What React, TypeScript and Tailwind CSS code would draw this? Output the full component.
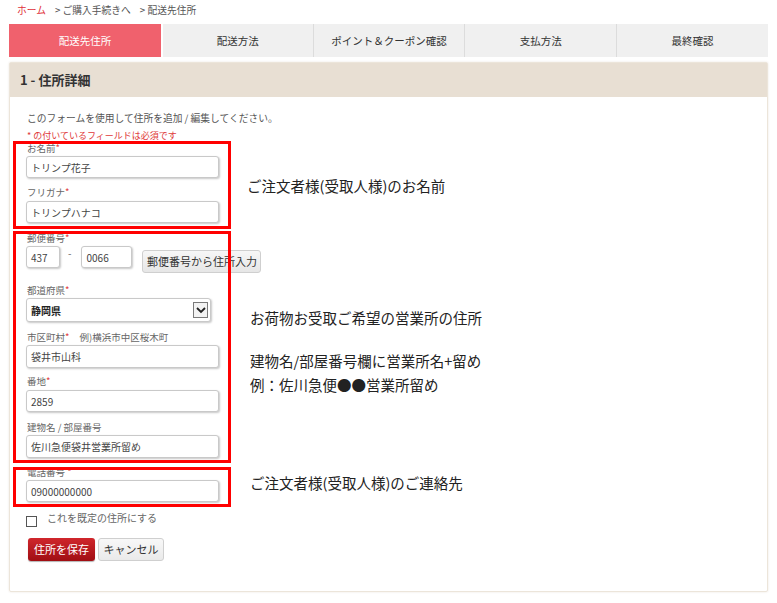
import type { ReactNode } from "react";

const tabs = ["配送先住所", "配送方法", "ポイント＆クーポン確認", "支払方法", "最終確認"];

const field =
  "flex items-center rounded-[3px] border border-[#c9c9c9] bg-white px-[4px] text-[10px] text-[#444] shadow-[1px_1px_2px_rgba(0,0,0,0.22)]";

function Label({ children, req, className = "" }: { children: ReactNode; req?: boolean; className?: string }) {
  return (
    <div className={`h-[12px] pl-[1px] text-[9.5px] leading-[12px] text-[#666] ${className}`}>
      {children}
      {req && <span className="text-[#e03a3a]">*</span>}
    </div>
  );
}

function Field({ value, className = "" }: { value: string; className?: string }) {
  return <div className={`${field} h-[22px] w-[193px] ${className}`}>{value}</div>;
}

export default function App() {
  return (
    <div className="relative h-[603px] w-[777px] overflow-hidden bg-white font-['Noto_Sans_CJK_JP',sans-serif] text-[#333]">
      {/* breadcrumb */}
      <div className="flex h-[24px] items-start gap-[6px] pl-[17px] pt-[3px] text-[9.75px] leading-[14px] text-[#555]">
        <span className="text-[#e0303a]">ホーム</span>
        <span className="ml-[3px]">&gt; ご購入手続きへ</span>
        <span className="ml-[3px]">&gt; 配送先住所</span>
      </div>

      {/* steps */}
      <div className="mx-[9px] grid h-[33px] grid-cols-5 bg-[#f0f0f0] text-[10.5px]">
        {tabs.map((t, i) => (
          <div
            key={t}
            className={
              i === 0
                ? "flex items-center justify-center bg-[#f0616d] text-white"
                : i === 1
                  ? "flex items-center justify-center border-l-2 border-white text-[#333]"
                  : "flex items-center justify-center border-l border-[#dcdcdc] text-[#333]"
            }
          >
            {t}
          </div>
        ))}
      </div>

      {/* panel */}
      <div className="mx-[9px] mt-[5px] h-[530px] rounded-[2px] border border-[#ece5da] shadow-[0_0_2px_rgba(180,160,130,0.3)]">
        <div className="flex h-[34px] items-center bg-[#e8dfd3] pl-[10px] text-[13px] font-bold text-[#333]">
          1 - 住所詳細
        </div>

        <div className="pl-[16px]">
          <div className="mt-[14px] pl-[1px] text-[9.75px] leading-[14px] text-[#555]">
            このフォームを使用して住所を追加 / 編集してください。
          </div>
          <div className="mt-[5px] pl-[1px] text-[9px] leading-[11px] text-[#e03a3a]">
            * の付いているフィールドは必須です
          </div>

          <Label req className="mt-[1px]">
            お名前
          </Label>
          <Field value="トリンプ花子" className="mt-[2px]" />
          <Label req className="mt-[8px]">
            フリガナ
          </Label>
          <Field value="トリンプハナコ" className="mt-[3px]" />

          <Label req className="mt-[9px]">
            郵便番号
          </Label>
          <div className="mt-[2px] flex h-[27px] items-start">
            <div className={`${field} h-[22px] w-[34px]`}>437</div>
            <span className="mx-[8px] mt-[1px] text-[10px] leading-[12px] text-[#666]">-</span>
            <div className={`${field} ml-[2px] h-[22px] w-[51px]`}>0066</div>
            <div className="ml-[10px] mt-[4px] flex h-[23px] w-[119px] items-center justify-center rounded-[3px] border border-[#cfcfcf] bg-gradient-to-b from-[#f7f7f7] to-[#e6e6e6] text-[11px] text-[#333]">
              郵便番号から住所入力
            </div>
          </div>

          <Label req className="mt-[11px]">
            都道府県
          </Label>
          <div className={`${field} mt-[2px] h-[24px] w-[185px] justify-between pr-[2px]`}>
            <span className="font-bold text-[#222]">静岡県</span>
            <span className="flex h-[16px] w-[15px] items-center justify-center border border-[#7a7a7a] bg-[#f3f3f3]">
              <svg width="10" height="7" viewBox="0 0 10 7">
                <polyline points="1,1 5,5 9,1" fill="none" stroke="#222" strokeWidth="1.8" />
              </svg>
            </span>
          </div>

          <Label className="mt-[9px]">
            市区町村<span className="text-[#e03a3a]">*</span>
            <span className="ml-[10px]">例)横浜市中区桜木町</span>
          </Label>
          <Field value="袋井市山科" className="mt-[2px] h-[23px]" />

          <Label req className="mt-[7px]">
            番地
          </Label>
          <Field value="2859" className="mt-[3px]" />

          <Label className="mt-[9px]">建物名 / 部屋番号</Label>
          <Field value="佐川急便袋井営業所留め" className="mt-[2px] h-[23px]" />

          <Label className="mt-[8px]">
            電話番号 <span className="text-[#e03a3a]">*</span>
          </Label>
          <Field value="09000000000" className="mt-[2px]" />

          <div className="mt-[9px] flex h-[16px] items-start">
            <span className="mt-[5px] h-[11px] w-[11px] border border-[#555] bg-white" />
            <span className="ml-[10px] text-[10px] leading-[14px] text-[#666]">これを既定の住所にする</span>
          </div>

          <div className="mt-[11px] flex gap-[3px] pl-[2px]">
            <button
              type="button"
              className="h-[23px] w-[67px] rounded-[3px] bg-gradient-to-b from-[#d0262c] to-[#a00d12] text-[11px] text-white shadow-[0_1px_1px_rgba(0,0,0,0.3)]"
            >
              住所を保存
            </button>
            <button
              type="button"
              className="h-[23px] w-[66px] rounded-[3px] border border-[#cfcfcf] bg-gradient-to-b from-[#f8f8f8] to-[#eaeaea] text-[11px] text-[#333]"
            >
              キャンセル
            </button>
          </div>
        </div>
      </div>

      {/* annotation overlay */}
      <div className="absolute left-[13px] top-[141px] h-[88px] w-[218px] border-[3px] border-[#ff0000]" />
      <div className="absolute left-[13px] top-[231px] h-[232px] w-[218px] border-[3px] border-[#ff0000]" />
      <div className="absolute left-[13px] top-[467px] h-[40px] w-[218px] border-[3px] border-[#ff0000]" />

      <div className="absolute left-[247px] top-[176px] text-[14.5px] leading-[20px] text-[#222]">
        ご注文者様(受取人様)のお名前
      </div>
      <div className="absolute left-[250px] top-[308px] text-[14.5px] leading-[20px] text-[#222]">
        <div>お荷物お受取ご希望の営業所の住所</div>
        <div className="mt-[21px] leading-[24px]">
          <div>建物名/部屋番号欄に営業所名+留め</div>
          <div>例：佐川急便●●営業所留め</div>
        </div>
      </div>
      <div className="absolute left-[250px] top-[473px] text-[14.5px] leading-[20px] text-[#222]">
        ご注文者様(受取人様)のご連絡先
      </div>
    </div>
  );
}
